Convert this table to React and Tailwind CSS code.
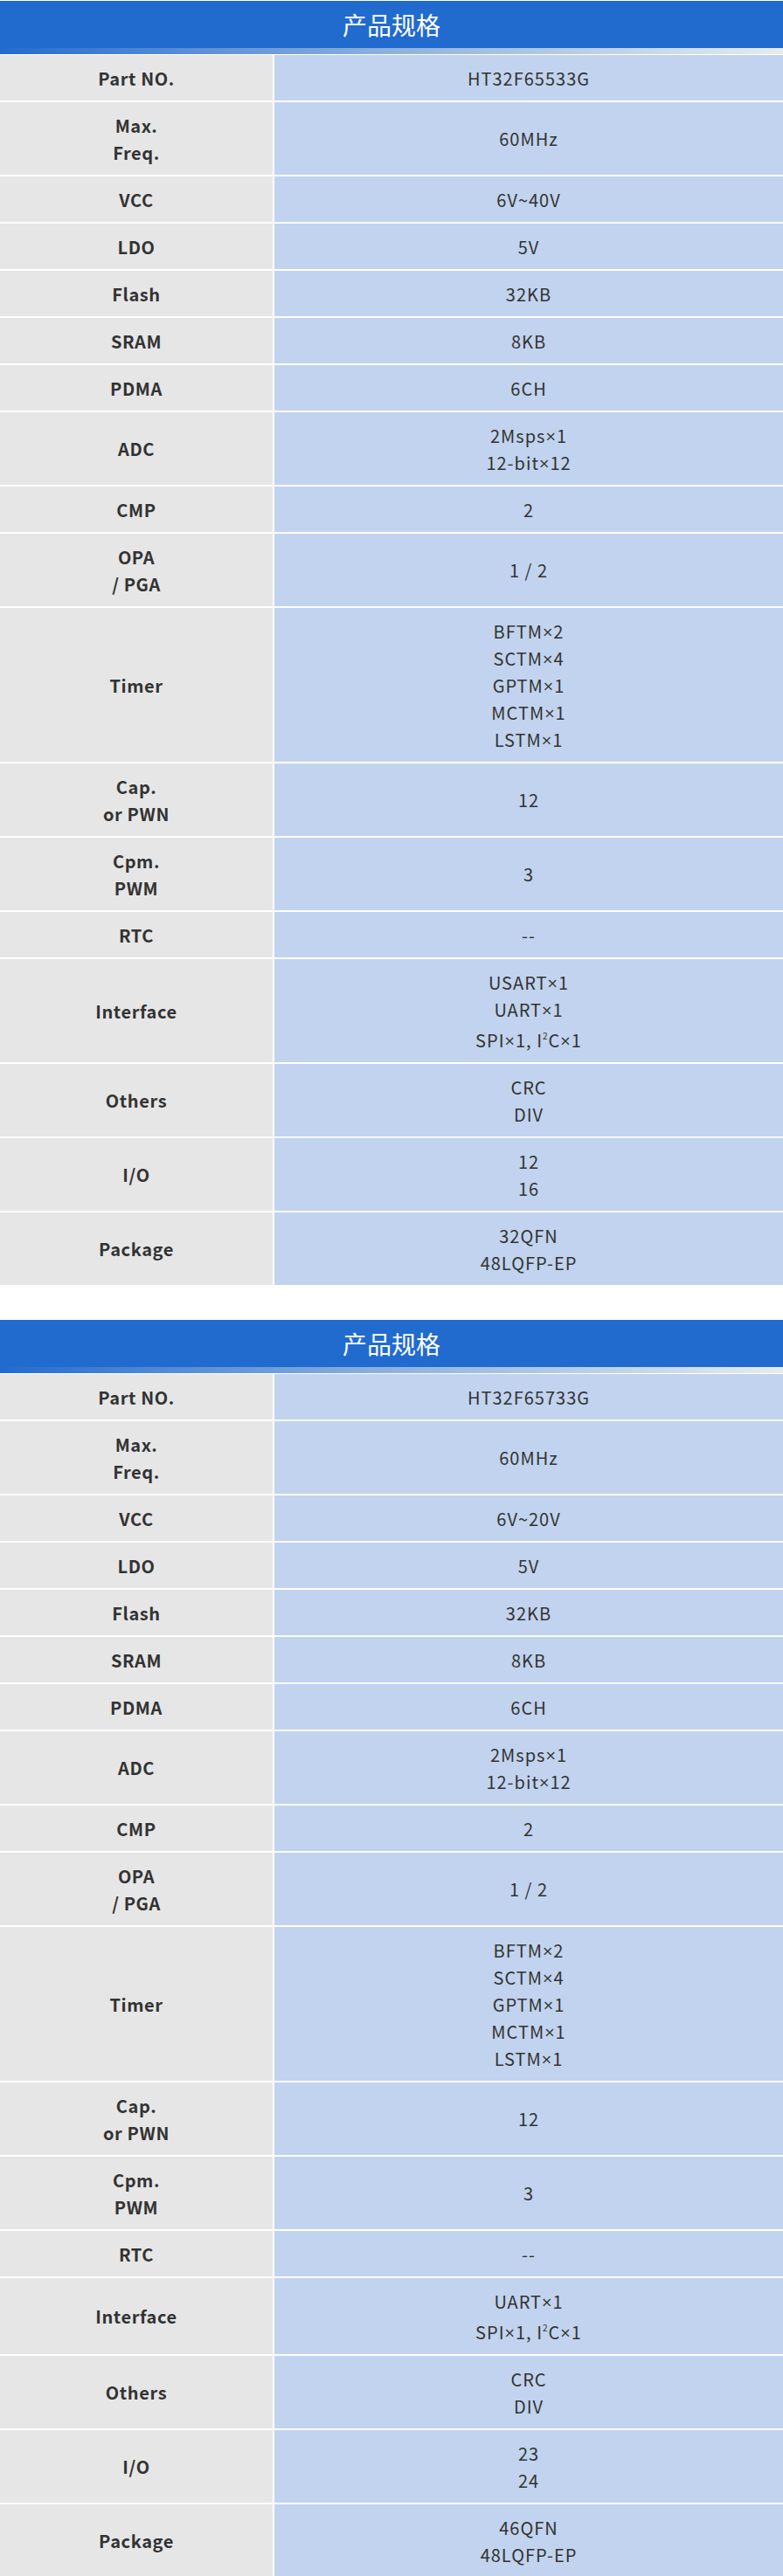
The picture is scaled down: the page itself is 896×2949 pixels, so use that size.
import React from 'react';

const FONT = '"Noto Sans CJK SC", "Open Sans", sans-serif';

// the CJK font draws × full-width; the reference uses a narrow one
const withTimes = (text) =>
  text.split('×').flatMap((part, i) =>
    i === 0
      ? [part]
      : [
          <span key={i} className="font-['Open_Sans'] leading-none">
            ×
          </span>,
          part,
        ]
  );

const I2C_LINE = (
  <span>
    SPI{withTimes('×1')}, I<sup className="text-[10px] -top-[9px]">2</sup>C{withTimes('×1')}
  </span>
);

const buildRows = (spec) => [
  { label: ['Part NO.'], values: [spec.part] },
  { label: ['Max.', 'Freq.'], values: ['60MHz'] },
  { label: ['VCC'], values: [spec.vcc] },
  { label: ['LDO'], values: ['5V'] },
  { label: ['Flash'], values: ['32KB'] },
  { label: ['SRAM'], values: ['8KB'] },
  { label: ['PDMA'], values: ['6CH'] },
  { label: ['ADC'], values: ['2Msps×1', '12-bit×12'] },
  { label: ['CMP'], values: ['2'] },
  { label: ['OPA', '/ PGA'], values: ['1 / 2'] },
  { label: ['Timer'], values: ['BFTM×2', 'SCTM×4', 'GPTM×1', 'MCTM×1', 'LSTM×1'] },
  { label: ['Cap.', 'or PWN'], values: ['12'] },
  { label: ['Cpm.', 'PWM'], values: ['3'] },
  { label: ['RTC'], values: ['--'] },
  { label: ['Interface'], values: spec.interface },
  { label: ['Others'], values: ['CRC', 'DIV'] },
  { label: ['I/O'], values: spec.io },
  { label: ['Package'], values: spec.pkg },
];

const SPECS = [
  {
    part: 'HT32F65533G',
    vcc: '6V~40V',
    interface: ['USART×1', 'UART×1', I2C_LINE],
    io: ['12', '16'],
    pkg: ['32QFN', '48LQFP-EP'],
  },
  {
    part: 'HT32F65733G',
    vcc: '6V~20V',
    interface: ['UART×1', I2C_LINE],
    io: ['23', '24'],
    pkg: ['46QFN', '48LQFP-EP'],
  },
];

const SpecTable = ({ spec, className = '' }) => {
  const rows = buildRows(spec);

  return (
    <section className={`pt-px ${className}`}>
      <header className="flex h-[54px] items-center justify-center bg-[#216bcf] text-[28px] text-white">
        产品规格
      </header>
      <div className="h-[7px] bg-linear-to-r from-[#206bcf] via-[#8fb1dd] to-[#e6ecee]" />
      <div className="mt-px flex flex-col gap-[2px]">
        {rows.map((row, index) => (
          <div key={index} className="grid grid-cols-[312px_1fr] gap-x-[2px]">
            <div className="flex flex-col items-center justify-center bg-[#e6e6e6] py-[10.5px] text-[20px] font-bold leading-[31px] tracking-[0.6px] text-[#333]">
              {row.label.map((line, i) => (
                <div key={i}>{line}</div>
              ))}
            </div>
            <div className="flex flex-col items-center justify-center bg-[#c1d3ee] py-[10.5px] text-[20px] leading-[31px] tracking-[1px] text-[#333]">
              {row.values.map((line, i) =>
                typeof line === 'string' ? (
                  <div key={i}>{withTimes(line)}</div>
                ) : (
                  <div key={i} className="pt-[4px]">
                    {line}
                  </div>
                )
              )}
            </div>
          </div>
        ))}
      </div>
    </section>
  );
};

export default function App() {
  return (
    <div className="w-[896px] bg-white" style={{ fontFamily: FONT }}>
      <SpecTable spec={SPECS[0]} />
      <SpecTable spec={SPECS[1]} className="mt-[39px]" />
    </div>
  );
}
